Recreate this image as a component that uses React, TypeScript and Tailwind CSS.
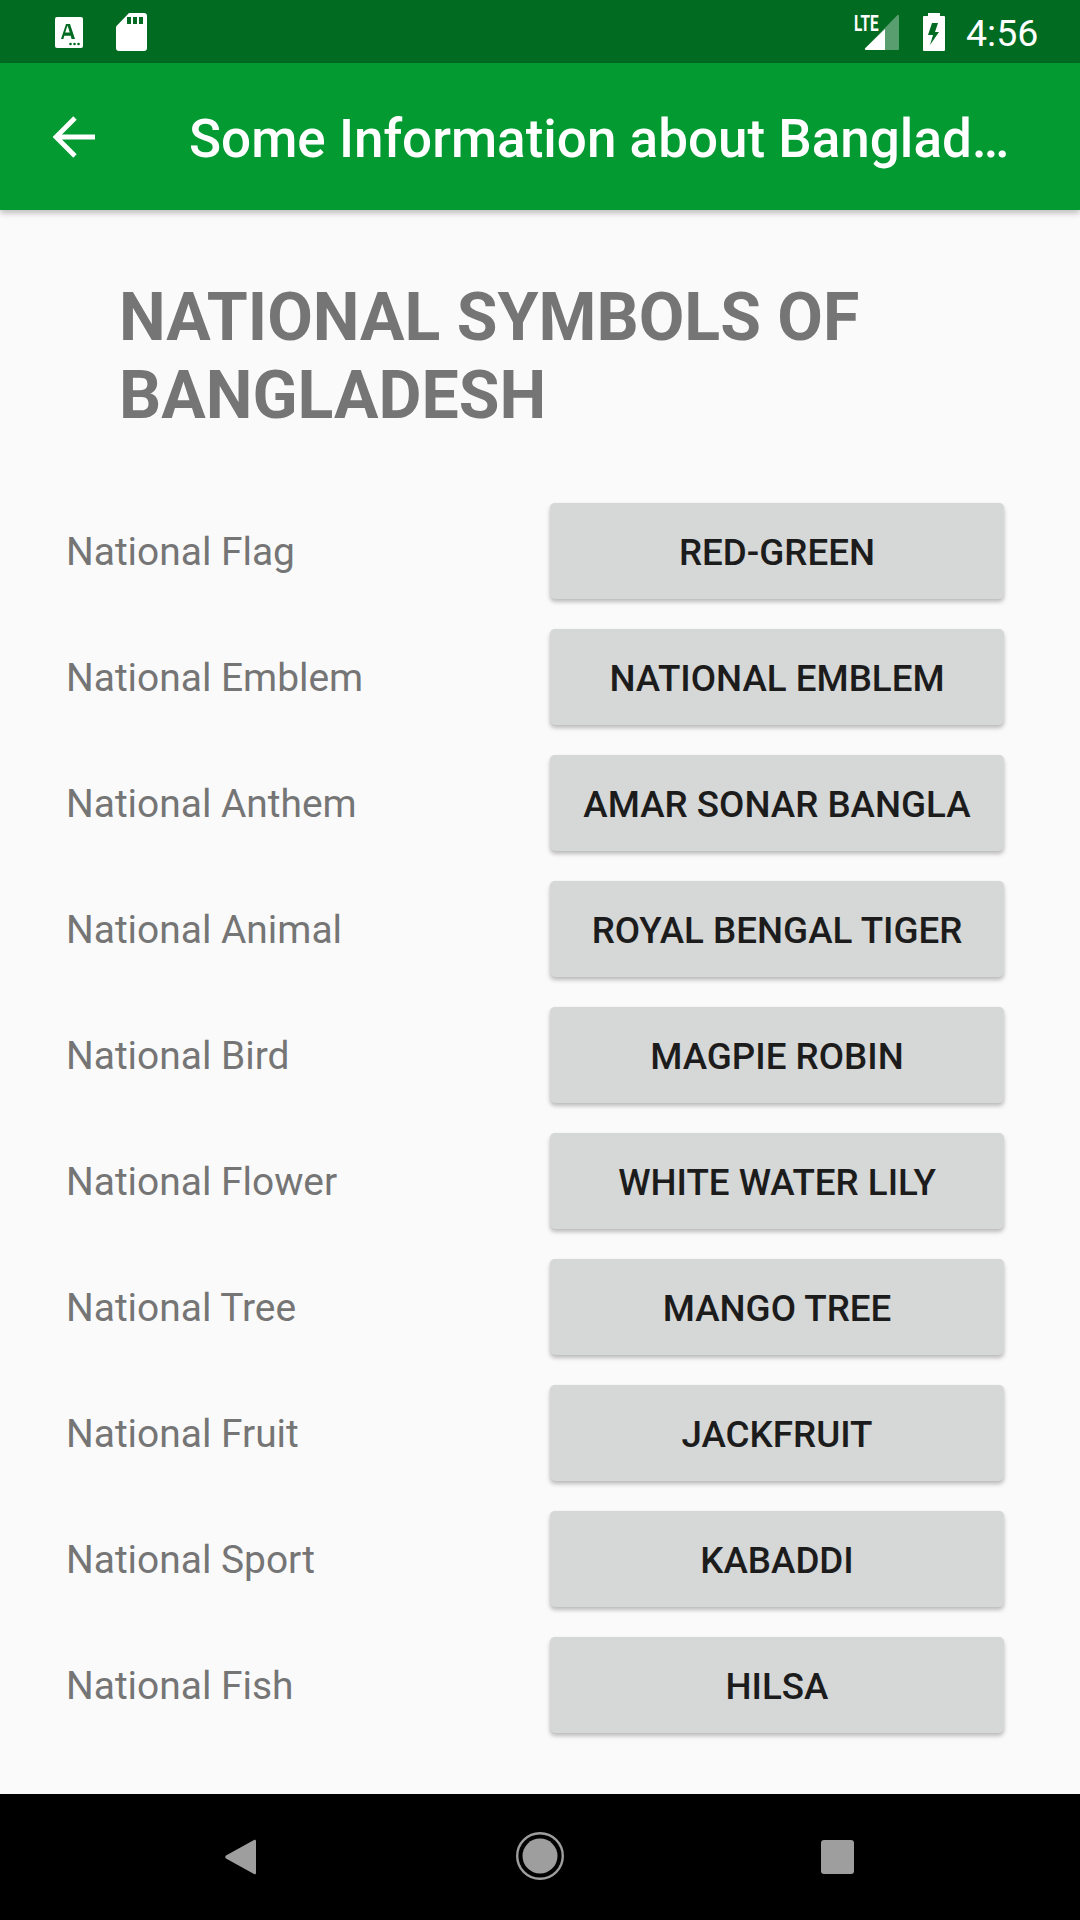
// Bangladesh national symbols screen. Labels on the left, answer buttons on the right.

const SYMBOLS = [
  ['National Flag', 'RED-GREEN'],
  ['National Emblem', 'NATIONAL EMBLEM'],
  ['National Anthem', 'AMAR SONAR BANGLA'],
  ['National Animal', 'ROYAL BENGAL TIGER'],
  ['National Bird', 'MAGPIE ROBIN'],
  ['National Flower', 'WHITE WATER LILY'],
  ['National Tree', 'MANGO TREE'],
  ['National Fruit', 'JACKFRUIT'],
  ['National Sport', 'KABADDI'],
  ['National Fish', 'HILSA'],
];

function StatusBar() {
  return (
    <div className="flex h-[63px] shrink-0 items-center bg-[#016b22] pl-[55px] pr-[43px] text-white">
      <svg width="28" height="31" viewBox="0 0 28 31" className="mt-[1px]">
        <rect width="28" height="31" rx="2" fill="#fff" />
        <path d="M6 22 11 7h4l5 15h-3.400l-.9-3.200H9.300L8.400 22zM10.200 15.600h4.600L12.500 8.500z" fill="#016b22" />
        <circle cx="15.500" cy="27" r="1.300" fill="#016b22" />
        <circle cx="19.500" cy="27" r="1.300" fill="#016b22" />
        <circle cx="23.500" cy="27" r="1.300" fill="#016b22" />
      </svg>
      <svg width="31" height="38" viewBox="0 0 31 38" className="ml-[33px]">
        <path d="M13 0h15a3 3 0 0 1 3 3v32a3 3 0 0 1-3 3H3a3 3 0 0 1-3-3V13.500z" fill="#fff" />
        <rect x="11" y="4" width="4" height="7" fill="#016b22" />
        <rect x="17" y="4" width="4" height="7" fill="#016b22" />
        <rect x="23" y="4" width="4" height="7" fill="#016b22" />
      </svg>
      <div className="relative ml-auto h-[38px] w-[46px]">
        <span className="absolute left-0 top-[-2px] origin-top-left scale-x-[0.68] font-['Roboto',sans-serif] text-[22.500px] font-bold leading-[24px]">
          LTE
        </span>
        <svg width="36" height="36" viewBox="0 0 36 36" className="absolute bottom-0 right-0">
          <path d="M35 1v33a1 1 0 0 1-1 1H2c-1 0-1.500-1-.8-1.700L33.300.300C34 -.4 35 0 35 1z" fill="#fff" fillOpacity="0.35" />
          <path d="M21 14v21H2c-1 0-1.500-1-.8-1.700z" fill="#fff" />
        </svg>
      </div>
      <svg width="22" height="38" viewBox="0 0 22 38" className="ml-[23px]">
        <path d="M5 0h12v3h4a1 1 0 0 1 1 1v33a1 1 0 0 1-1 1H1a1 1 0 0 1-1-1V4a1 1 0 0 1 1-1h4z" fill="#fff" />
        <path d="M9 10h6l-3 9h4L7 32l3-10H5z" fill="#016b22" />
      </svg>
      <span className="ml-[21px] mt-[4px] w-[71px] font-['Roboto',sans-serif] text-[37.500px] leading-none">4:56</span>
    </div>
  );
}

function AppBar() {
  return (
    <div className="relative z-10 flex h-[147px] shrink-0 items-center bg-[#039a32] shadow-[0_3px_6px_rgba(0,0,0,0.25)]">
      <svg width="44" height="42" viewBox="0 0 44 42" className="ml-[52px]">
        <path d="M43 21H4M23 2 4 21l19 19" fill="none" stroke="#fff" strokeWidth="4.800" />
      </svg>
      <span className="ml-[93px] mt-[5px] font-['Roboto',sans-serif] text-[53px] font-medium leading-none text-white">
        Some Information about Banglad…
      </span>
    </div>
  );
}

function SymbolRow({ label, value }: { label: string; value: string }) {
  return (
    <div className="flex h-[126px] items-center justify-between">
      <span className="pt-[2px] text-[38.900px] text-[#757575]">{label}</span>
      <button
        type="button"
        className="h-[96px] w-[454px] rounded-[5px] bg-[#d6d7d7] pt-[4px] text-center text-[36.750px] font-medium text-[#1c1c1c] shadow-[0_3px_4px_rgba(0,0,0,0.25),0_0_1px_rgba(0,0,0,0.08)]"
      >
        {value}
      </button>
    </div>
  );
}

function NavBar() {
  return (
    <div className="flex h-[126px] shrink-0 items-center bg-black">
      <svg width="31" height="36" viewBox="0 0 31 36" className="ml-[225px]">
        <path d="M29 1c1-.8 2 0 2 1v32c0 1-1 1.800-2 1L1 19.500c-1-.8-1-2 0-3z" fill="#9e9e9e" />
      </svg>
      <svg width="48" height="48" viewBox="0 0 48 48" className="ml-[260px] mt-[-2px]">
        <circle cx="24" cy="24" r="22.800" fill="none" stroke="#9e9e9e" strokeWidth="2.400" />
        <circle cx="24" cy="24" r="17.500" fill="#9e9e9e" />
      </svg>
      <div className="ml-[257px] h-[34px] w-[33px] rounded-[3px] bg-[#9e9e9e]" />
    </div>
  );
}

export default function App() {
  return (
    <div className="flex h-[1920px] w-[1080px] flex-col overflow-hidden bg-[#fafafa] font-['Roboto',sans-serif]">
      <StatusBar />
      <AppBar />
      <div className="flex min-h-0 flex-1 flex-col">
        <h1 className="pl-[119px] pr-[100px] pt-[69px] text-[66.200px] font-bold leading-[78px] text-[#757575]">
          NATIONAL SYMBOLS OF BANGLADESH
        </h1>
        <div className="flex flex-col pl-[66px] pr-[76px] pt-[53px]">
          {SYMBOLS.map(([label, value]) => (
            <SymbolRow key={label} label={label} value={value} />
          ))}
        </div>
      </div>
      <NavBar />
    </div>
  );
}
